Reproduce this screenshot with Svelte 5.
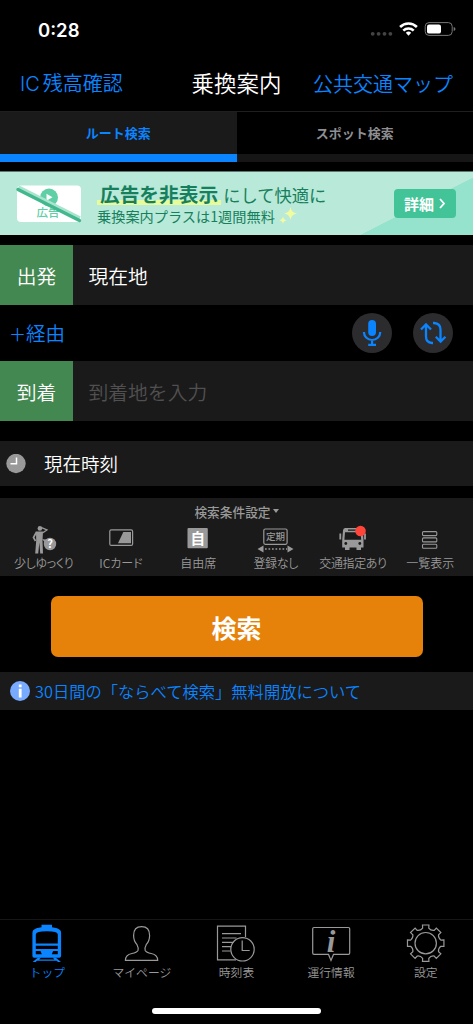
<script lang="ts">
  const conditions = [
    { id: "walk", label: "少しゆっくり" },
    { id: "card", label: "ICカード" },
    { id: "seat", label: "自由席" },
    { id: "pass", label: "登録なし" },
    { id: "bus", label: "交通指定あり" },
    { id: "list", label: "一覧表示" },
  ];

  const menu = [
    { id: "top", label: "トップ" },
    { id: "mypage", label: "マイページ" },
    { id: "timetable", label: "時刻表" },
    { id: "info", label: "運行情報" },
    { id: "settings", label: "設定" },
  ];

  let activeMenu = "top";
  let activeTab = "route";

  const gearPath = (cx: number, cy: number): string => {
    const point = (r: number, deg: number) => {
      const rad = (deg * Math.PI) / 180;
      return `${(cx + r * Math.cos(rad)).toFixed(2)} ${(cy + r * Math.sin(rad)).toFixed(2)}`;
    };
    let d = "";
    for (let i = 0; i < 8; i++) {
      const a = i * 45;
      d += `${i ? "L" : "M"}${point(15.4, a - 11.5)}L${point(18.5, a - 10)}`;
      d += `L${point(18.5, a + 10)}L${point(15.4, a + 11.5)}`;
      d += `Q${point(13.4, a + 22.5)} ${point(15.4, a + 33.5)}`;
    }
    return d + "Z";
  };
</script>

<div class="app">
  <div class="status">
    <span class="clock">0:28</span>
    <svg width="88" height="20" viewBox="0 0 88 20">
      <g fill="#444">
        <circle cx="4.7" cy="13.8" r="1.9" />
        <circle cx="10.6" cy="13.8" r="1.9" />
        <circle cx="16.5" cy="13.8" r="1.9" />
        <circle cx="22.4" cy="13.8" r="1.9" />
      </g>
      <g fill="none" stroke="#fff" stroke-width="2.6">
        <path d="M32.1 7a12 12 0 0 1 16.8 0" />
        <path d="M35.3 10.6a7.5 7.5 0 0 1 10.4 0" />
      </g>
      <path d="M37.8 12.8a4 4 0 0 1 5.4 0L40.5 15.7z" fill="#fff" />
      <rect x="57.2" y="2.6" width="27" height="12.8" rx="3.8" fill="none" stroke="#777" />
      <rect x="59" y="4.4" width="14" height="9.2" rx="2.2" fill="#fff" />
      <path d="M85.7 7v4q1.8-.6 1.8-2t-1.8-2" fill="#777" />
    </svg>
  </div>

  <header>
    <a href="#ic"><span>IC</span>残高確認</a>
    <h1>乗換案内</h1>
    <a href="#map">公共交通マップ</a>
  </header>

  <div class="tabs">
    <button class:active={activeTab === "route"} on:click={() => (activeTab = "route")}>ルート検索</button>
    <button class:active={activeTab === "spot"} on:click={() => (activeTab = "spot")}>スポット検索</button>
  </div>

  <div class="banner">
    <svg class="no-ads" width="70" height="44" viewBox="0 0 70 44">
      <rect x="3" y="3.5" width="64" height="36.5" rx="4" fill="#fff" />
      <circle cx="35" cy="15.5" r="9" fill="#5fcfa6" />
      <path d="M32.5 11.7v7l6-3.5z" fill="#fff" />
      <text x="22.5" y="34.8" font-size="11.5" font-weight="500" fill="#5fcfa6">広告</text>
      <path d="M4.5 5L66 36" stroke="#a9e4cf" stroke-width="3.5" />
      <path d="M4 7.4L65.5 38.5" stroke="#43b78d" stroke-width="3.4" stroke-linecap="round" />
    </svg>
    <div class="banner-text">
      <p class="lead"><strong>広告を非表示</strong><span>にして快適に</span></p>
      <p class="sub">
        乗換案内プラスは1週間無料
        <svg width="18" height="18" viewBox="0 0 18 18" fill="#f1fba0">
          <path d="M11.5 0Q12.3 5.7 18 6.5Q12.3 7.3 11.5 13Q10.7 7.3 5 6.5Q10.7 5.7 11.5 0z" />
          <path d="M4 9.5Q4.5 12.5 7.6 13.2Q4.5 13.8 4 17Q3.5 13.8 .4 13.2Q3.5 12.5 4 9.5z" />
        </svg>
      </p>
    </div>
    <button class="detail">
      詳細
      <svg width="7" height="11" viewBox="0 0 7 11"><path d="M1 1l4 4.5L1 10" fill="none" stroke="#fff" stroke-width="1.8" /></svg>
    </button>
  </div>

  <div class="field">
    <span class="field-name">出発</span>
    <span class="field-value">現在地</span>
  </div>
  <div class="via">
    <a href="#via"><span>＋</span>経由</a>
    <button class="round" aria-label="音声入力">
      <svg width="40" height="40" viewBox="0 0 40 40" fill="none" stroke="#0a84ff" stroke-width="2.2">
        <rect x="16.2" y="7" width="7.8" height="16" rx="3.9" fill="#0a84ff" stroke="none" />
        <path d="M12 19v.5a8.1 7.5 0 0 0 16.2 0V19M20.1 27v4.5M16.2 31.8h7.8" />
      </svg>
    </button>
    <button class="round" aria-label="入れ替え">
      <svg width="40" height="40" viewBox="0 0 40 40" fill="none" stroke="#0a84ff" stroke-width="2.3">
        <path d="M20 30h-1q-6-.5-6-6.5V12M8 16.5L13 11.5l5 5M20 10h1q6.5.5 6.5 6.5V28M22.8 23.7l4.8 4.8 4.8-4.8" />
      </svg>
    </button>
  </div>
  <div class="field">
    <span class="field-name">到着</span>
    <span class="field-value placeholder">到着地を入力</span>
  </div>

  <div class="time">
    <svg width="20" height="20" viewBox="0 0 20 20">
      <circle cx="10" cy="9.5" r="9.7" fill="#999" />
      <path d="M10.5 3.5v6.3H4.5" fill="none" stroke="#fff" stroke-width="1.5" />
    </svg>
    <span>現在時刻</span>
  </div>

  <section class="conditions">
    <h2>検索条件設定<i></i></h2>
    <ul>
      {#each conditions as item}
        <li class={item.id}>
          <svg width="40" height="30" viewBox="0 0 40 30" fill="none" stroke="#999">
            {#if item.id === "walk"}
              <circle cx="15.9" cy="4.4" r="2.3" fill="#999" stroke="none" />
              <path d="M17 3.4l6 2.4-4.5 3.3" stroke-width="1.3" />
              <path d="M12 7.5h7l-.5 9 .5 13h-2.8l-.8-11-1.2 11h-3l1-13z" fill="#999" stroke="none" />
              <path d="M12.5 8l-3 5.5 2 3.5" stroke-width="1.7" />
              <circle cx="26" cy="20" r="6.2" fill="#999" stroke="none" />
              <path d="M18 15l5 .8-2 3z" fill="#999" stroke="none" />
              <text x="26" y="23.9" class="mark" font-size="11">?</text>
            {:else if item.id === "card"}
              <rect x="8.8" y="5.8" width="22.8" height="15.6" rx="1.5" stroke-width="1.2" />
              <path d="M17 19.3L22.3 8H30v11.3z" fill="#999" stroke="none" />
            {:else if item.id === "seat"}
              <rect x="9.5" y="4" width="20.3" height="20.3" rx="1" fill="#999" stroke="none" />
              <text x="19.7" y="19.5" class="mark" font-size="14.5">自</text>
            {:else if item.id === "pass"}
              <rect x="7.8" y="5" width="23.3" height="15.3" rx="1.5" stroke-width="1.2" />
              <text x="19.5" y="16.2" class="tiny">定期</text>
              <path d="M9 25h22" stroke-width="1.6" stroke-dasharray="1.7 1.8" />
              <path d="M1.5 25l6-3.5v7zM37.500 25l-6-3.5v7z" fill="#999" stroke="none" />
            {:else if item.id === "bus"}
              <path d="M12 4h15q2.5 0 2.700 2.500l.8 9.500V23.500H28V26h-4.500V23.500h-7V26H12V23.500H9.200v-7.500L10 6.500q.2-2.500 2-2.500z" fill="#999" stroke="none" />
              <path d="M12 8.300h15.600l.6 7.400H11.400zM15 5.400h9.500v1.300h-9.500z" fill="#1a1a1a" stroke="none" />
              <circle cx="12.800" cy="19.500" r="1.400" fill="#1a1a1a" stroke="none" />
              <circle cx="26.800" cy="19.500" r="1.400" fill="#1a1a1a" stroke="none" />
              <path d="M7.300 9.500v6M32 9.500v6" stroke-width="1.800" />
              <circle cx="27.500" cy="7" r="5.300" fill="#ff453a" stroke="none" />
            {:else}
              <rect x="12.500" y="7.600" width="14.300" height="4" rx="1" stroke-width="1.100" />
              <rect x="12.500" y="13.900" width="14.300" height="4" rx="1" stroke-width="1.100" />
              <rect x="12.500" y="20.200" width="14.300" height="4" rx="1" stroke-width="1.100" />
            {/if}
          </svg>
          <span>{item.label}</span>
        </li>
      {/each}
    </ul>
  </section>

  <button class="search">検索</button>

  <a class="notice" href="#notice">
    <svg width="20" height="20" viewBox="0 0 20 20">
      <circle cx="10" cy="10" r="10" fill="#78abff" />
      <path d="M10.200 3.500v2.800M10.200 7.800v8.700" stroke="#fff" stroke-width="2.800" />
    </svg>
    <span>30日間の「ならべて検索」無料開放について</span>
  </a>

  <nav>
    {#each menu as item}
      <button class:active={activeMenu === item.id} on:click={() => (activeMenu = item.id)}>
        <svg width="44" height="42" viewBox="0 0 44 42" fill="none" stroke="currentColor" stroke-width="1.200">
          {#if item.id === "top"}
            <g fill="currentColor" stroke="none">
              <path
                fill-rule="evenodd"
                d="M16.500 5.200V2.700h10.500v2.500q6 .6 8.300 3.100.8 1 .8 3V34q0 1.700-1.700 1.700H9.100Q7.400 35.700 7.400 34V11.300q0-2 .8-3 2.300-2.500 8.300-3.100zM10.800 21.500h22V12.500q0-3.200-11-3.200t-11 3.200zM10.800 23.700v3.200h22v-3.200zM10.800 29v3.300h6L15.500 29zM32.800 29v3.300h-6L28.100 29z"
              />
              <path d="M13 35.500h3l-1.800 2h15.200l-1.800-2h3l5.400 4.500h-3l-1.400-1.200H12L10.600 40h-3z" />
            </g>
          {:else if item.id === "mypage"}
            <path d="M18 28.500q.8-2.500-1-5.800Q13.600 19 13.600 13.500q0-8.800 8-8.800t8 8.800q0 5.500-3.400 9.200-1.800 3.300-1 5.800 1 2 6 3 6.500 1.200 6.500 6.900H5.400q0-5.700 6.500-6.900 5-1 6.100-3z" />
          {:else if item.id === "timetable"}
            <path d="M31.500 15V4.200H3.500v33.600H22M8 11.600h19M8 16h14.500M8 20.300h11.500M8 24.600h9M8 29h8.500" />
            <circle cx="28.500" cy="27.300" r="11.700" />
            <path d="M28.200 18.500v10h7.500" />
          {:else if item.id === "info"}
            <path d="M5 5.500h34.400q1.300 0 1.300 1.300v24.300q0 1.300-1.300 1.300H24.500l-2.500 6-2.500-6H5q-1.300 0-1.300-1.300V6.800Q3.700 5.500 5 5.500z" />
            <text x="22" y="29.500" class="letter">i</text>
          {:else}
            <path d={gearPath(21.7, 21.2)} />
            <circle cx="21.700" cy="21.200" r="10.700" />
          {/if}
        </svg>
        <span>{item.label}</span>
      </button>
    {/each}
  </nav>
  <div class="home"></div>
</div>

<style>
  :global(body) {
    background: #000;
  }
  .app {
    display: flex;
    flex-direction: column;
    height: 1024px;
    overflow: hidden;
    background: #000;
    color: #fff;
    font-family: "Noto Sans CJK JP", sans-serif;
    font-weight: 350;
  }
  button {
    border: 0;
    padding: 0;
    margin: 0;
    background: none;
    color: inherit;
    font: inherit;
    cursor: pointer;
  }
  a {
    color: #0a84ff;
    text-decoration: none;
  }
  svg {
    display: block;
    flex: none;
  }
  p,
  h1,
  h2,
  ul {
    margin: 0;
    padding: 0;
  }

  .status {
    display: flex;
    justify-content: space-between;
    align-items: center;
    height: 58px;
    box-sizing: border-box;
    padding: 1px 17px 0 38px;
  }
  .clock {
    font: 600 18.5px/24px Inter, sans-serif;
  }

  header {
    display: grid;
    grid-template-columns: 1fr auto 1fr;
    align-items: center;
    height: 54px;
    box-sizing: border-box;
    padding: 0 20px 2px;
    font-size: 20px;
    line-height: 30px;
    border-bottom: 1px solid #1f1f1f;
  }
  header a:last-child {
    text-align: right;
  }
  header a span {
    padding-right: 3px;
    font-family: Inter, sans-serif;
    font-weight: 300;
  }
  h1 {
    padding-bottom: 3px;
    font-size: 22.5px;
    font-weight: 350;
  }

  .tabs {
    display: flex;
    height: 50px;
    flex: none;
  }
  .tabs button {
    flex: 1;
    padding-bottom: 1px;
    border-bottom: 8px solid #161616;
    color: #8e8e93;
    font-size: 13px;
    font-weight: 700;
  }
  .tabs .active {
    background: #1a1a1a;
    border-color: #0a84ff;
    color: #0a84ff;
  }

  .banner {
    display: flex;
    flex: none;
    align-items: center;
    box-sizing: border-box;
    height: 64px;
    margin: 9px 0 10px;
    padding: 0 17px 0 14px;
    border-top: 1px solid #5a7a70;
    background: linear-gradient(153deg, #b9e9d9 0 81%, #95e2cd 81.2%);
    color: #16805c;
  }
  .no-ads {
    overflow: visible;
  }
  .banner-text {
    flex: 1;
    padding-left: 13px;
    white-space: nowrap;
  }
  .lead {
    display: flex;
    align-items: center;
    height: 24px;
    font-size: 17.3px;
    font-weight: 400;
  }
  .lead strong {
    padding: 0 3px;
    font-size: 19.7px;
    line-height: 22px;
    background: linear-gradient(transparent 76%, #e5fb9c 76%);
  }
  .lead span {
    padding-left: 2px;
  }
  .sub {
    display: flex;
    align-items: center;
    gap: 4px;
    height: 19px;
    font-size: 14.2px;
    font-weight: 400;
  }
  .detail {
    display: flex;
    align-items: center;
    justify-content: center;
    gap: 5px;
    width: 62px;
    height: 29px;
    border-radius: 4px;
    background: #43c498;
    color: #fff;
    font-size: 15px;
    font-weight: 700;
  }

  .field {
    display: flex;
    flex: none;
    height: 60px;
    line-height: 61px;
    font-size: 19.8px;
    background: #1a1a1a;
  }
  .field-name {
    width: 73px;
    text-align: center;
    background: #438850;
  }
  .field-value {
    padding-left: 15.5px;
  }
  .placeholder {
    color: #505050;
  }
  .via {
    display: flex;
    flex: none;
    align-items: center;
    gap: 21px;
    height: 56px;
    padding: 0 20px 0 9px;
    font-size: 19.5px;
  }
  .via a {
    flex: 1;
    padding-bottom: 2px;
  }
  .via a span {
    font-size: 17px;
  }
  .round {
    width: 40px;
    height: 40px;
    border-radius: 50%;
    background: #2c2c2e;
  }

  .time {
    display: flex;
    align-items: center;
    gap: 18px;
    flex: none;
    height: 45px;
    margin: 20px 0 12px;
    padding-left: 6px;
    font-size: 18.5px;
    background: #1a1a1a;
  }
  .time span {
    padding-bottom: 1px;
  }

  .conditions {
    flex: none;
    height: 78px;
    background: #1a1a1a;
    color: #999;
  }
  h2 {
    display: flex;
    align-items: center;
    justify-content: center;
    gap: 2px;
    height: 26px;
    font-size: 12.7px;
    font-weight: 500;
  }
  h2 i {
    border: 3.5px solid transparent;
    border-top: 4.5px solid #999;
    border-bottom: 0;
  }
  ul {
    display: grid;
    grid-template-columns: repeat(6, 1fr);
    padding: 0 4px 0 5px;
    list-style: none;
  }
  li {
    display: flex;
    flex-direction: column;
    align-items: center;
    font-size: 12px;
    line-height: 18px;
    white-space: nowrap;
    font-feature-settings: "palt";
  }
  .walk,
  .bus,
  .pass {
    letter-spacing: -0.4px;
  }
  .mark {
    fill: #fff;
    stroke: none;
    font-weight: 700;
    text-anchor: middle;
  }
  .tiny {
    fill: #999;
    stroke: none;
    font-size: 9.5px;
    font-weight: 500;
    letter-spacing: 0;
    text-anchor: middle;
  }

  .search {
    flex: none;
    width: 372px;
    height: 61px;
    margin: 20px auto 15px;
    border-radius: 7px;
    background: #e6820a;
    font-size: 25px;
    font-weight: 700;
  }

  .notice {
    display: flex;
    align-items: center;
    gap: 5px;
    flex: none;
    height: 38px;
    padding-left: 10px;
    background: #1a1a1a;
    font-size: 16.3px;
  }

  nav {
    display: grid;
    grid-template-columns: repeat(5, 1fr);
    margin-top: auto;
    height: 88px;
    border-top: 1px solid #161616;
    color: #999;
  }
  nav button {
    display: flex;
    flex-direction: column;
    align-items: center;
    padding-top: 2px;
    font-size: 11.8px;
    line-height: 15px;
  }
  nav .active {
    color: #0a84ff;
  }
  .letter {
    fill: currentColor;
    stroke: none;
    font: italic 700 31px "Liberation Serif", serif;
    text-anchor: middle;
  }
  .home {
    flex: none;
    width: 169px;
    height: 6px;
    margin: 0 auto 10px;
    border-radius: 3px;
    background: #fff;
  }
</style>
